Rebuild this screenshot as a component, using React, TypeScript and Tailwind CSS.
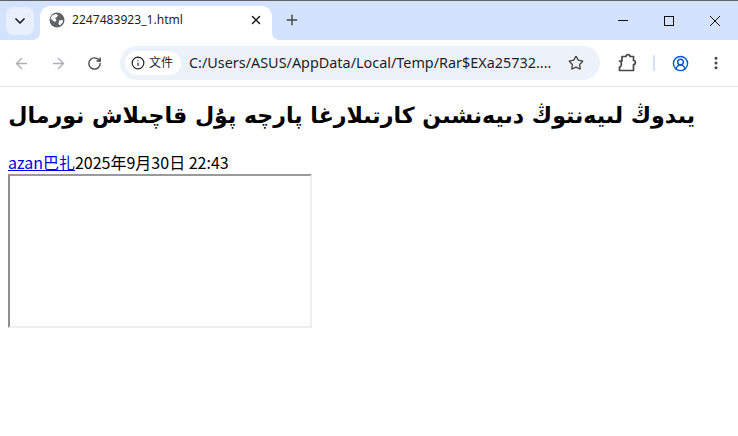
import { ArrowLeft, ArrowRight, ChevronDown, CircleUserRound, EllipsisVertical, Info, Plus, RotateCw, Star, X } from 'lucide-react';

function Globe() {
    return (
        <svg width="16" height="16" viewBox="0 0 16 16" className="shrink-0">
            <circle cx="8" cy="8" r="7.5" fill="#5f6368" />
            <path d="M3 3.5 L6.5 2 L9 3 L8 5 L6 6 L7.5 8 L6 10 L4.5 9 L1.5 6.5 Z M10 8.5 L13.5 8 L14 10 L11 13.5 L9.5 12 Z" fill="#ffffff" />
        </svg>
    );
}

function Puzzle() {
    return (
        <svg width="20" height="20" viewBox="0 0 20 20" fill="none" stroke="#474747" strokeWidth="1.7" strokeLinejoin="round">
            <path d="M2.5 8 L5 8 L5 3.5 L9 3.5 C9 1 13 1 13 3.5 L16.5 3.5 L16.5 7.5 C19 7.5 19 11.5 16.5 11.5 L16.5 17.5 L2.5 17.5 L2.5 14 C5 14 5 8 2.5 8 Z" />
        </svg>
    );
}

function WindowControls() {
    return (
        <div className="ml-auto h-[34px] flex items-center pb-[4px] pr-[15px] gap-[30px]">
            <svg width="16" height="16" viewBox="0 0 16 16" stroke="#111111" strokeWidth="1">
                <path d="M3 7.5 H13" />
            </svg>
            <svg width="16" height="16" viewBox="0 0 16 16" stroke="#111111" strokeWidth="1" fill="none">
                <rect x="3.5" y="3.5" width="9" height="9" />
            </svg>
            <svg width="16" height="16" viewBox="0 0 16 16" stroke="#111111" strokeWidth="1">
                <path d="M3 3 L13 13 M13 3 L3 13" />
            </svg>
        </div>
    );
}

export default function App() {
    return (
        <div className="w-[738px] h-[436px] overflow-hidden bg-white font-['Noto_Sans','Noto_Sans_CJK_SC',sans-serif] text-black">
            <div className="h-[40px] bg-[#d3e3fd] border-t border-[#5f6368] flex items-end pl-[6px]">
                <div className="w-[28px] h-[28px] mb-[5px] rounded-lg bg-[#e9f0fd] flex items-center justify-center">
                    <ChevronDown size={16} strokeWidth={2.6} color="#1f1f1f" />
                </div>
                <div className="relative ml-[6px] w-[232px] h-[34px] bg-white rounded-t-[10px] flex items-center pl-[9px] pr-[9px] pb-[6px] z-10">
                    <svg width="8" height="8" viewBox="0 0 8 8" className="absolute left-[-8px] bottom-0">
                        <path d="M8 0 V8 H0 C5 8 8 5 8 0 Z" fill="#ffffff" />
                    </svg>
                    <svg width="8" height="8" viewBox="0 0 8 8" className="absolute right-[-8px] bottom-0">
                        <path d="M0 0 V8 H8 C3 8 0 5 0 0 Z" fill="#ffffff" />
                    </svg>
                    <Globe />
                    <span className="ml-[7px] text-[12.1px] leading-none text-[#1f1f1f] flex-1">2247483923_1.html</span>
                    <X size={14} strokeWidth={2.6} color="#1f1f1f" />
                </div>
                <div className="ml-[12px] mb-[12px]">
                    <Plus size={16} strokeWidth={2.2} color="#474747" />
                </div>
                <WindowControls />
            </div>
            <div className="h-[47px] bg-white rounded-t-[10px] border-b border-[#e3e3e3] flex items-center">
                <div className="w-[120px] flex items-center pl-[13px] gap-[19px]">
                    <ArrowLeft size={17} color="#adb0b4" strokeWidth={2} />
                    <ArrowRight size={17} color="#adb0b4" strokeWidth={2} className="ml-[1px]" />
                    <RotateCw size={15} color="#474747" strokeWidth={2.2} className="ml-[1px]" />
                </div>
                <div className="w-[480px] h-[34px] rounded-full bg-[#edf2fa] flex items-center pl-[5px] pr-[16px]">
                    <div className="w-[56px] h-[24px] rounded-full bg-white flex items-center pl-[6px] gap-[4px]">
                        <Info size={14} color="#1f1f1f" strokeWidth={2} />
                        <span className="text-[12px] leading-none text-[#1f1f1f]">文件</span>
                    </div>
                    <span className="ml-[8px] text-[14.4px] leading-none text-[#1f1f1f] whitespace-nowrap flex-1">C:/Users/ASUS/AppData/Local/Temp/Rar$EXa25732....</span>
                    <Star size={16} color="#474747" strokeWidth={2} />
                </div>
                <div className="flex items-center ml-[17px]">
                    <Puzzle />
                    <div className="w-[2px] h-[16px] bg-[#d3e3fd] ml-[16px]" />
                    <CircleUserRound size={17} color="#0b57d0" strokeWidth={2} className="ml-[17px]" />
                    <EllipsisVertical size={16} color="#474747" strokeWidth={2.6} className="ml-[19px]" />
                </div>
            </div>
            <div className="p-[8px]">
                <h1 className="mt-[2px] mb-[18px] text-[22.13px] leading-[36px] font-bold font-['DejaVu_Sans',sans-serif] text-right w-[687px] whitespace-nowrap" dir="rtl">
                    يىدوڭ لىيەنتوڭ دىيەنشىن كارتىلارغا پارچە پۇل قاچىلاش نورمال
                </h1>
                <div className="text-[16px] leading-[23px] font-['Noto_Sans_CJK_SC',sans-serif] whitespace-nowrap">
                    <a href="#" className="text-[#0000ee] underline">azan巴扎</a>2025年9月30日 22:43
                </div>
                <div className="w-[304px] h-[154px] border-2 border-t-[#9a9a9a] border-l-[#8f8f8f] border-r-[#eeeeee] border-b-[#eeeeee]" />
            </div>
        </div>
    );
}
